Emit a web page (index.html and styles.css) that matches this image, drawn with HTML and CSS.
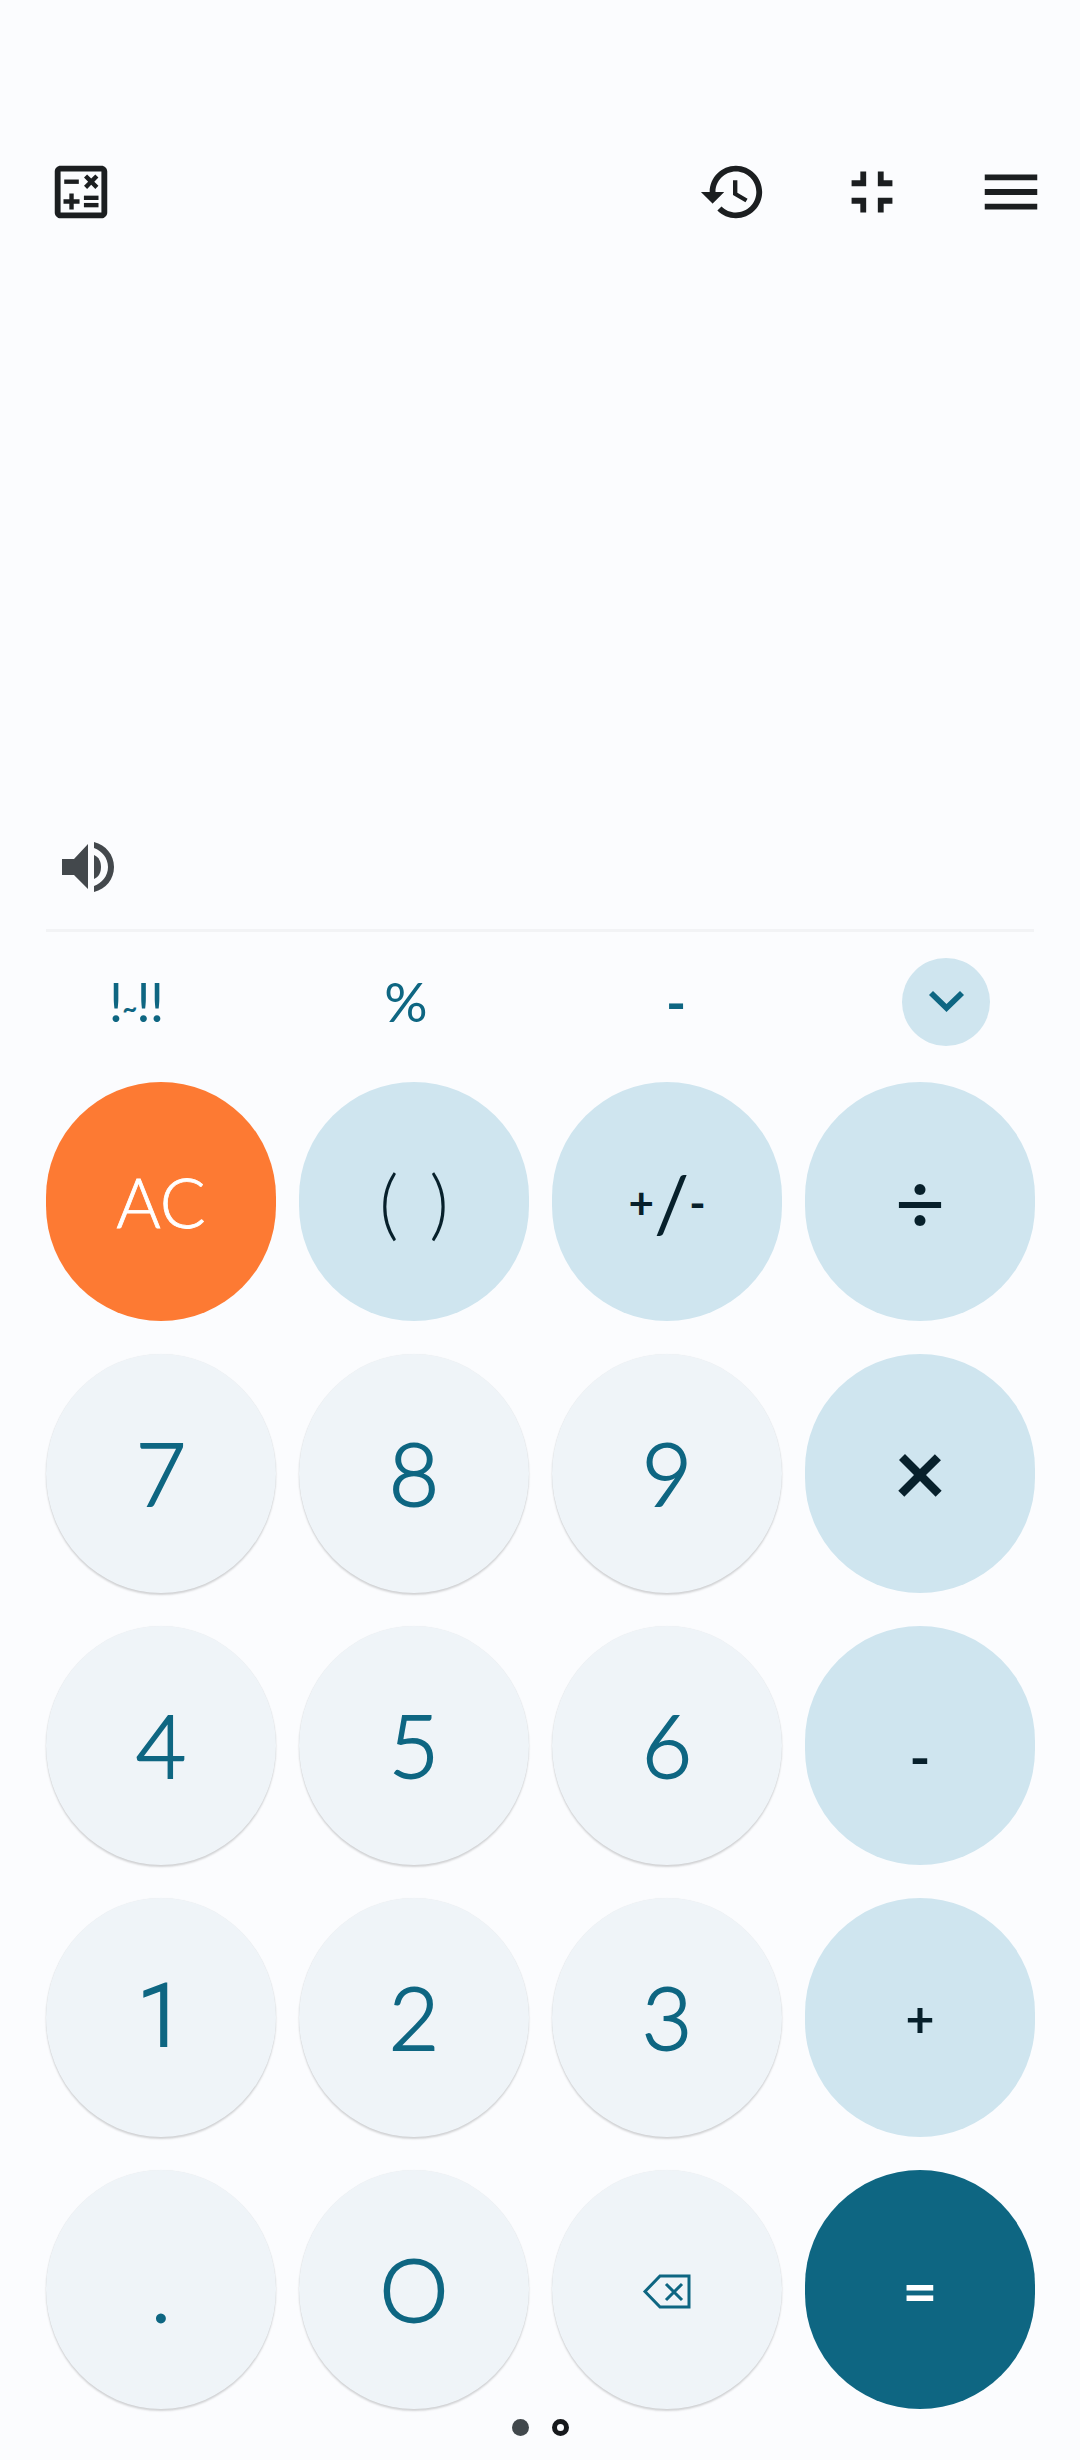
FILE: index.html
```html
<!DOCTYPE html>
<html lang="en">
<head>
    <meta charset="UTF-8">
    <meta name="viewport" content="width=device-width, initial-scale=1.0">
    <title>Calculator</title>
    <link rel="stylesheet" href="styles.css">
</head>
<body>
    <div class="app">
        <div class="topbar">
            <svg class="icon calc-icon" viewBox="0 0 24 24"><path d="M19 3H5c-1.1 0-2 .9-2 2v14c0 1.1.9 2 2 2h14c1.1 0 2-.9 2-2V5c0-1.1-.9-2-2-2zm0 16H5V5h14v14z"/><path d="M6.25 7.72h5v1.5h-5z"/><path d="M13 15.75h5v1.5h-5z"/><path d="M13 13.25h5v1.5h-5z"/><path d="M8 18h1.5v-2h2v-1.5h-2v-2H8v2H6V16h2z"/><path d="M14.09 10.95 15.5 9.54l1.41 1.41 1.06-1.06-1.41-1.42 1.41-1.41L16.91 6 15.5 7.41 14.09 6l-1.06 1.06 1.41 1.41-1.41 1.42z"/></svg>
            <svg class="icon history-icon" viewBox="0 0 24 24"><path d="M13 3c-4.97 0-9 4.03-9 9H1l3.89 3.89.07.14L9 12H6c0-3.87 3.13-7 7-7s7 3.13 7 7-3.13 7-7 7c-1.93 0-3.68-.79-4.94-2.06l-1.42 1.42C8.27 19.99 10.51 21 13 21c4.97 0 9-4.03 9-9s-4.03-9-9-9zm-1 5v5l4.28 2.54.72-1.21-3.5-2.08V8H12z"/></svg>
            <svg class="icon" viewBox="0 0 24 24"><path d="M5 16h3v3h2v-5H5v2zm3-8H5v2h5V5H8v3zm6 11h2v-3h3v-2h-5v5zm2-11V5h-2v5h5V8h-3z"/></svg>
            <svg class="icon" viewBox="0 0 24 24"><path d="M3 18h18v-2H3v2zm0-5h18v-2H3v2zm0-7v2h18V6H3z"/></svg>
        </div>

        <div class="display">
            <svg class="sound-icon" viewBox="0 0 52 50">
                <path d="M0 17H12L26 2V47L12 33H0Z"/>
                <path d="M32 13C37 15 39 20 39 25C39 30 37 35 32 37Z"/>
                <path d="M32 0C44 3 52 13 52 25C52 37 44 47 32 50V44C40 41 46 34 46 25C46 16 40 9 32 6Z"/>
            </svg>
        </div>
        <div class="divider"></div>

        <div class="fn-row">
            <div class="fn fact">!<span class="tilde">~</span>!!</div>
            <div class="fn">%</div>
            <div class="fn dash">-</div>
            <div class="fn fn-toggle">
                <svg viewBox="0 0 35 21"><path d="M0 4 4 0 17.500 13 31 0 35 4 17.500 21Z"/></svg>
            </div>
        </div>

        <div class="keypad">
            <button class="key clear">AC</button>
            <button class="key op parens">( )</button>
            <button class="key op sign"><span>+</span><span class="slash">/</span><span>-</span></button>
            <button class="key op big">÷</button>

            <button class="key num">7</button>
            <button class="key num">8</button>
            <button class="key num">9</button>
            <button class="key op big times">×</button>

            <button class="key num">4</button>
            <button class="key num">5</button>
            <button class="key num">6</button>
            <button class="key op small minus">-</button>

            <button class="key num one">1</button>
            <button class="key num">2</button>
            <button class="key num">3</button>
            <button class="key op small">+</button>

            <button class="key num">.</button>
            <button class="key num">O</button>
            <button class="key num">
                <svg class="back-icon" viewBox="0 0 50 36"><path d="M3 17.500 18 2H47V33H18Z"/><path d="M24 10 40 26M40 10 24 26"/></svg>
            </button>
            <button class="key equals">=</button>
        </div>

        <div class="pager">
            <span class="dot"></span>
            <span class="dot ring"></span>
        </div>
    </div>
</body>
</html>
```

FILE: styles.css
```css
body {
    margin: 0;
    padding: 0;
    background-color: #fbfcfe;
    font-family: Lato, "Liberation Sans", sans-serif;
}
.app {
    width: 1080px;
    height: 2460px;
    box-sizing: border-box;
    padding: 157px 46px 0;
    overflow: hidden;
}
.topbar {
    display: flex;
    gap: 69px;
    margin-right: -12px;
    height: 70px;
}
.icon {
    width: 70px;
    height: 70px;
    fill: #1b1e20;
}
.calc-icon {
    margin-right: auto;
}
.display {
    height: 702px;
    box-sizing: border-box;
    padding: 615px 0 0 16px;
}
.sound-icon {
    display: block;
    width: 52px;
    height: 50px;
    fill: #43484c;
}
.divider {
    height: 3px;
    background-color: #f2f3f5;
}
.fn-row {
    display: flex;
    justify-content: space-between;
    align-items: center;
    height: 150px;
    padding: 0 44px 11px 46px;
    box-sizing: border-box;
}
.fn {
    width: 88px;
    height: 88px;
    display: flex;
    align-items: center;
    justify-content: center;
    font-size: 54px;
    font-weight: 400;
    color: #0e6682;
    white-space: nowrap;
}
.fact {
    letter-spacing: -1px;
}
.tilde {
    font-size: 26px;
    font-weight: 700;
    margin-top: 12px;
}
.dash {
    font-weight: 700;
}
.fn-toggle {
    border-radius: 50%;
    background-color: #cfe5ef;
}
.fn-toggle svg {
    width: 35px;
    height: 21px;
    fill: #0e6682;
}
.keypad {
    display: grid;
    grid-template-columns: repeat(4, 230px);
    grid-auto-rows: 239px;
    gap: 33px 23px;
}
.key {
    display: flex;
    align-items: center;
    justify-content: center;
    padding: 0;
    border: none;
    border-radius: 115px;
    font-family: inherit;
    font-size: 87px;
    font-weight: 400;
    line-height: 1;
}
.num {
    background-color: #eff4f8;
    color: #0e6682;
    border-radius: 50%;
    padding-bottom: 3px;
    box-shadow: 0 2px 2px rgba(0, 0, 0, 0.16), 0 0 1px rgba(0, 0, 0, 0.08);
    font-weight: 300;
    -webkit-text-stroke: 1.8px #0e6682;
}
.op {
    background-color: #cfe5ef;
    color: #07202b;
}
.clear {
    background-color: #fd7a33;
    color: white;
    font-size: 68px;
    font-weight: 300;
    -webkit-text-stroke: 0.8px white;
}
.equals {
    background-color: #0e6682;
    color: white;
    font-size: 60px;
    font-weight: 700;
}
.parens {
    font-size: 76px;
    font-weight: 300;
    word-spacing: 10px;
}
.sign {
    font-size: 44px;
    font-weight: 700;
}
.sign .slash {
    font-size: 78px;
    font-weight: 400;
}
.big {
    font-size: 88px;
    padding-bottom: 4px;
}
.times {
    font-size: 92px;
    font-weight: 700;
    padding-bottom: 6px;
}
.small {
    font-size: 50px;
    font-weight: 700;
}
.minus {
    font-size: 56px;
    padding-top: 22px;
}
.one {
    font-family: Roboto, sans-serif;
    -webkit-text-stroke: 2px #0e6682;
}
.back-icon {
    width: 50px;
    height: 36px;
    fill: none;
    stroke: #0e6682;
    stroke-width: 3;
    margin-top: 7px;
}
.pager {
    display: flex;
    justify-content: center;
    gap: 23px;
    margin-top: 10px;
}
.dot {
    width: 17px;
    height: 17px;
    box-sizing: border-box;
    border-radius: 50%;
    background-color: #41484c;
}
.ring {
    background-color: transparent;
    border: 5px solid #16191c;
}
```
